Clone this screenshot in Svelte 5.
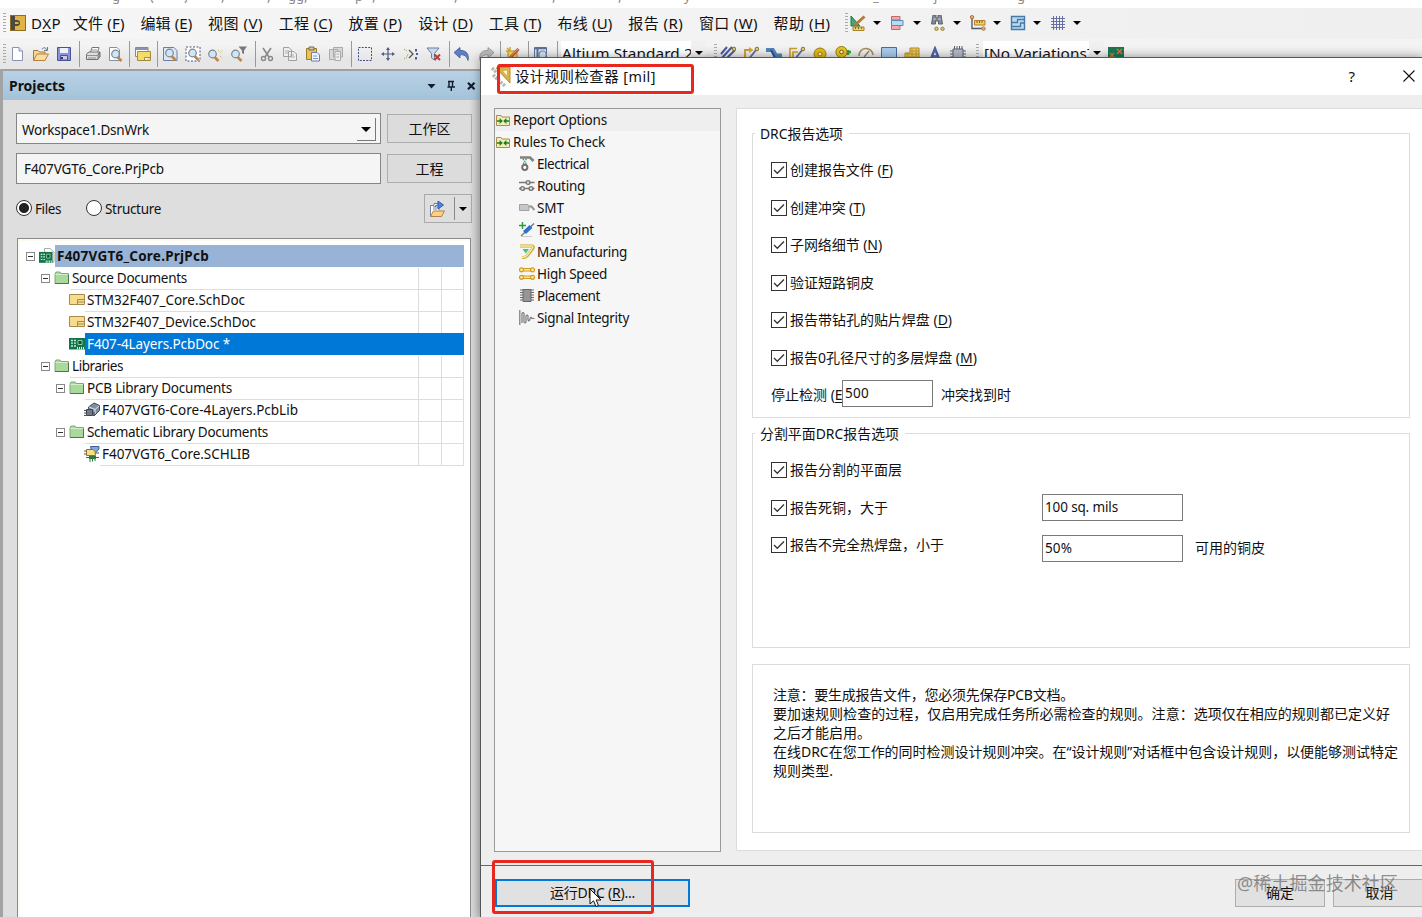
<script>
  function fit(node, width) {
    if (!width) return;
    node.style.letterSpacing = '0px';
    const natural = node.getBoundingClientRect().width;
    const n = [...node.textContent].length;
    if (n > 1) node.style.letterSpacing = (width - natural) / n + 'px';
  }

  const titleMarks = [
    ['g', 112], ['(', 38], [')', 34], [',', 37], [',', 46], ['gg', 21], [',', 16], ['p', 51], [',', 17],
    [',', 82], [',', 98], [',', 66], ['y', 66], ['_', 189], ['j', 61], ['g', 83]
  ];

  const menus = [
    ['文件', 'F', 52], ['编辑', 'E', 52], ['视图', 'V', 55], ['工程', 'C', 54], ['放置', 'P', 54],
    ['设计', 'D', 55], ['工具', 'T', 53], ['布线', 'U', 55], ['报告', 'R', 55], ['窗口', 'W', 59], ['帮助', 'H', 57]
  ];

  const menuTools = ['draw', 'align', 'binoc', 'dims', 'rooms', 'grid'];

  const toolsA = [
    ['new', 3], ['open', 8], ['save', 7], ['|', 7], ['print', 5], ['preview', 6], ['|', 6], ['sheet', 5], ['|', 6],
    ['zoomdoc', 4], ['zoomsel', 7], ['zoomlast', 7], ['zoomfil', 7], ['|', 8], ['cut', 3], ['copy', 7], ['paste', 7],
    ['stamp', 7], ['|', 7], ['marquee', 5], ['move', 7], ['desel', 7], ['clearf', 7], ['|', 7], ['undo', 4],
    ['redo', 8], ['|', 6], ['wizard', 4], ['|', 7], ['browse', 4], ['|', 8]
  ];
  const toolsB = ['multi', 'route', 'diff', 'iroute', 'pad', 'via', 'arc', 'fill', 'poly', 'string', 'comp'];

  const lens = '<path d="M9.5 10 L13.5 14" stroke="#c8843c" stroke-width="2.6"/><circle cx="7.5" cy="7" r="3.8" fill="#cfe6f7" stroke="#7c8794" stroke-width="1.2"/>';
  const folder = '<path d="M1 4 L2 2 H6 L7 3.5 H14.5 V13.5 H1Z" fill="#a9d99b" stroke="#7da878"/><path d="M1.5 4.5 H13.5" stroke="#d4f0cb"/><path d="M1 13.5 H14.5 V5" stroke="#4f7550"/>';
  const dfolder = '<path d="M1.5 3.5 H6 L7 5 H14.5 V13.5 H1.5Z" fill="#f5edb5" stroke="#a58f4c"/><path d="M2 9 H7 M9 9 H14" stroke="#178322" stroke-width="1.4"/><path d="M4.6 6 L7.8 9 L4.6 12Z M11.4 6 L8.2 9 L11.4 12Z" fill="#178322"/>';
  const board = '<path d="M0 2 H16 V13.5 H0Z" fill="#13764a"/><path d="M2 4.5 H4 M2 7.2 H4 M2 10 H4 M5 4.5 H7 M5 7.2 H7 M5 10 H7" stroke="#c6ead5" stroke-width="1.3"/><path d="M9 4.5 H13 V8.5 H9Z" fill="#0b4d2d" stroke="#b4e0c8" stroke-width=".8"/><path d="M8.5 11 V13.5 M10.5 11 V13.5 M12.5 11 V13.5 M14.5 11 V13.5" stroke="#e0f5e8"/>';

  const icons = {
    dxp: '<rect x=".5" y=".5" width="15" height="15" fill="#dfb445" stroke="#8d6c23"/><path d="M1 1 H5 V5 H7 A3 3 0 0 1 7 11 H5 V15 H1Z" fill="#4a4a42"/><path d="M5 8 H8.5" stroke="#dfb445" stroke-width="2"/>',
    new: '<path d="M3.5 1.5 H10 L13.5 5 V14.5 H3.5Z" fill="#fff" stroke="#8b93b5"/><path d="M10 1.5 V5 H13.5" fill="#dfe4f5" stroke="#8b93b5"/>',
    open: '<path d="M.5 14.5 V4.5 H5 L6.5 6 H12 V8" fill="#f3d79a" stroke="#a77a3c"/><path d="M.5 14.5 L4 8 H15.5 L12 14.5Z" fill="#fbdca0" stroke="#b8813f"/><path d="M9 3 Q12 0 14 4 M14.5 1 V4.5 H11" stroke="#6f7a86" fill="none"/>',
    save: '<path d="M1.5 1.5 H14.5 V14.5 H1.5Z" fill="#8c91d4" stroke="#4d529b"/><path d="M4 2 H12 V7 H4Z" fill="#eef1fb"/><path d="M4.5 9.5 H11.5 V14 H4.5Z" fill="#c7cbe8" stroke="#4d529b"/><path d="M6 11 V13" stroke="#35397a" stroke-width="2"/>',
    print: '<path d="M5 8 L7 1.5 H14 L12 8Z" fill="#fff" stroke="#777"/><path d="M1.5 8 L4 6 H15 L13 8 V13.5 H1.5Z" fill="#dcdee0" stroke="#6e7072"/><path d="M1.5 9.5 H13 M3 12 H11 M7 4 H12" stroke="#8e9092"/><path d="M13 8 L15 6 V11 L13 13" fill="#999" stroke="#6e7072"/>',
    preview: '<path d="M2.5 1.5 H10 L12.5 4 V14.5 H2.5Z" fill="#fff" stroke="#8791a5"/><g transform="translate(1 1)">' + lens + '</g>',
    sheet: '<path d="M.5 1.5 H13 V10.5 H.5Z" fill="#fff" stroke="#a58a3b"/><path d="M.5 3 H13" stroke="#8b93b5" stroke-width="2"/><path d="M2.5 5.5 H15.5 V14.5 H2.5Z" fill="#f4dc6c" stroke="#a58a3b"/><path d="M9.5 14 V11.5 H15" fill="#fff" stroke="#a58a3b"/>',
    zoomdoc: '<path d="M1.5 1.5 H12 L15 4.5 V14.5 H1.5Z" fill="#dbe7f5" stroke="#6e7fa5"/>' + lens,
    zoomsel: '<path d="M1 1 H15 V15 H1Z" fill="#fff" stroke="#4a5584" stroke-dasharray="2 1.5"/>' + lens,
    zoomlast: '<g transform="translate(-3 1)">' + lens + '</g><path d="M10 4 L12.5 6.5 L15 4 M12 10 L14.5 12" stroke="#c3b66a" stroke-dasharray="1.5 1" fill="none"/>',
    zoomfil: '<g transform="translate(-3 1)">' + lens + '</g><path d="M7.5 .5 H16 L13 4.5 V8 L11 7 V4.5Z" fill="#777"/>',
    cut: '<path d="M4 2 L10 11 M12 2 L6 11" stroke="#888" stroke-width="1.6"/><circle cx="4.5" cy="12.5" r="2" fill="none" stroke="#888" stroke-width="1.4"/><circle cx="11.5" cy="12.5" r="2" fill="none" stroke="#888" stroke-width="1.4"/>',
    copy: '<path d="M1.5 1.5 H7 L9.5 4 V10.5 H1.5Z M6.5 5.5 H12 L14.5 8 V14.5 H6.5Z" fill="#eee" stroke="#a0a0a0"/><path d="M3 5 H7 M3 7 H6 M8 9 H12 M8 11 H13" stroke="#b0b0b0"/>',
    paste: '<path d="M1.5 2.5 H11.5 V13.5 H1.5Z" fill="#e7c35a" stroke="#9b7a2c"/><path d="M4 1 H9 V4 H4Z" fill="#c8c8bf" stroke="#7a6a3c"/><path d="M6.5 6.5 H12 L14.5 9 V15 H6.5Z" fill="#eef3fc" stroke="#6e7fb0"/><path d="M8 10 H12 M8 12.5 H13" stroke="#7f93c5"/>',
    stamp: '<path d="M1.5 3.5 H10 V13.5 H1.5Z M5.5 1.5 H14.5 V11 H5.5Z" fill="#d8d8d8" stroke="#aaa"/><path d="M7 5.5 H12.5 V14.5 H7Z" fill="#eee" stroke="#aaa"/><path d="M8.5 8 H11 M8.5 11 H11" stroke="#aaa"/>',
    marquee: '<path d="M1.5 1.5 H14.5 V14.5 H1.5Z" fill="none" stroke="#3f4c8c" stroke-dasharray="2 1.25"/>',
    move: '<path d="M8 2.5 V13.5 M2.5 8 H13.5" stroke="#4f5d7c" stroke-width="1.2"/><path d="M8 1 L10 4 H6Z M8 15 L10 12 H6Z M1 8 L4 6 V10Z M15 8 L12 6 V10Z" fill="#4f5d7c"/>',
    desel: '<path d="M1 3 L4 5 M1 13 L4 11 L5 8" stroke="#a9a24f" stroke-dasharray="1.5 1" fill="none"/><path d="M6 4 L10 8 L6 12" stroke="#555" stroke-width="1.3" fill="none"/><path d="M12 3 H14 V5.5 H12Z M13 7 H15 V9 H13Z M12 11 H14 V13.5 H12Z" fill="#4f5d9c"/>',
    clearf: '<path d="M1 2 H13 L8.5 7.5 V14 L5.5 12 V7.5Z" fill="#c8dcec" stroke="#6a7f99"/><path d="M8.5 8.5 L14 14 M14 8.5 L8.5 14" stroke="#c43a35" stroke-width="2"/>',
    undo: '<path d="M0 6.5 L6 1.5 V4.5 C12 4 15.5 8 14 14.5 C12.5 10 10.5 8.5 6 8.8 V12Z" fill="#5d7fc9" stroke="#3d5594" stroke-width=".8"/>',
    redo: '<path d="M16 6.5 L10 1.5 V4.5 C4 4 .5 8 2 14.5 C3.5 10 5.5 8.5 10 8.8 V12Z" fill="#bdbdbd" stroke="#929292" stroke-width=".8"/>',
    wizard: '<path d="M3 5 H12 V14 H3Z" fill="#f6d95c" stroke="#b3942e"/><path d="M2 2 L5 5 M5 1 V4 M1 5 H4" stroke="#d6a51c" stroke-width="1.4"/><path d="M5 12 L13.5 3" stroke="#c8503c" stroke-width="3"/><path d="M6 10.5 L13 3" stroke="#f1b06c" stroke-width="1"/>',
    browse: '<path d="M1.5 1.5 H13.5 V14 H1.5Z" fill="#dbe7f5" stroke="#5c6f99"/><path d="M2 2.5 H13" stroke="#5c6f99" stroke-width="1.6"/><path d="M4.5 2 V14" stroke="#5c6f99" stroke-width="2"/><g transform="translate(2.5 2) scale(.95)">' + lens + '</g>',
    multi: '<path d="M1 8 L7 1 M1 13 L12 1 M5 14 L15 4" stroke="#4a5a9a" stroke-width="2"/><circle cx="14" cy="3" r="1.8" fill="#d7c777" stroke="#80713a"/>',
    route: '<path d="M2 12 V4 H6" stroke="#c79b28" stroke-width="1.8" fill="none"/><path d="M6 1 L10.5 4 L6 7Z" fill="#d7a52a"/><path d="M5 14 L13 4" stroke="#5e6f9c" stroke-width="2"/><circle cx="14" cy="3" r="1.8" fill="#e1cf77" stroke="#80713a"/>',
    diff: '<path d="M0 2 H8 L11 7.5 H16 V11.5 H9 L6 6 H0Z" fill="#4d86b8"/><path d="M5 4 L9 12" stroke="#2d4f94" stroke-width="2"/>',
    iroute: '<path d="M1 12 V2.5 H8 M4 12 V6 H9" stroke="#c79b28" stroke-width="1.6" fill="none"/><path d="M6 13 L14 3" stroke="#5e6f9c" stroke-width="2"/><circle cx="14" cy="3" r="1.8" fill="#e1cf77" stroke="#80713a"/>',
    pad: '<circle cx="8" cy="8" r="6" fill="#e3b919" stroke="#9b7a0c"/><circle cx="8" cy="8" r="2" fill="#fff4b5" stroke="#9b7a0c"/>',
    via: '<path d="M9 6 H16 M13 4 V9" stroke="#3f9a35" stroke-width="2.5"/><circle cx="6.5" cy="6" r="5.6" fill="#e3c419" stroke="#9b7a0c"/><circle cx="6.5" cy="6" r="1.8" fill="#fff" stroke="#705a0c"/>',
    arc: '<path d="M1 10 A7 7 0 0 1 15 9" stroke="#a48a5c" stroke-width="1.6" fill="none"/><path d="M6 11 L11 5" stroke="#82796c" stroke-width="1.2"/>',
    fill: '<path d="M.5 1.5 H15.5 V14 H.5Z" fill="#a7cbec" stroke="#4a6c9e"/>',
    poly: '<path d="M1 14 V7 H6 V2 H15 V14Z" fill="#f1cd5b" stroke="#b18a25"/><path d="M6 5 H15 M1 8 H15 M1 11 H15 M4 7 V14 M8 3 V14 M12 3 V14" stroke="#c09a33"/>',
    string: '<path d="M3.5 14 L8 2.5 L12.5 14" fill="none" stroke="#4f62a8" stroke-width="2.4"/><path d="M5 10 H11" stroke="#4f62a8" stroke-width="1.8"/>',
    comp: '<path d="M3 3 H13 V15 H3Z" fill="#b4b8c6" stroke="#5c6170"/><path d="M4.5 0 V3 M7 0 V3 M9.5 0 V3 M12 0 V3 M0 5 H3 M0 8 H3 M0 11 H3 M13 5 H16 M13 8 H16 M13 11 H16" stroke="#5c6170"/>',
    variant: '<path d="M0 1 H16 V16 H0Z" fill="#1a7650"/><path d="M2 7 L6 11 M6 7 L2 11 M9 3 L14 8 M14 3 L9 8" stroke="#d0743d" stroke-width="1.5"/>',
    draw: '<path d="M1 1 V11 H10Z" fill="#45a870" stroke="#1e7744"/><path d="M5 10 L14.5 1.5" stroke="#b77a38" stroke-width="3"/><path d="M3 12 H14 V15.5 H3Z" fill="#f4cf62" stroke="#a5822c"/><path d="M5.5 12 V14 M8.5 12 V14 M11.5 12 V14" stroke="#8d6c23"/>',
    align: '<path d="M1.5 1.5 H10 V5 H1.5Z M1.5 10.5 H10 V14.5 H1.5Z" fill="#f1a9a9" stroke="#c26a6d"/><path d="M1.5 5.5 H13 V10.5 H1.5Z" fill="#b5dcf3" stroke="#558bb5"/>',
    binoc: '<path d="M3 0 H6 V3 H8 V0 H11 L12.5 9 H8.5 V6 H5.5 V9 H1.5Z" fill="#858b96" stroke="#5c626d"/><path d="M3.5 4 H5.5 M8.5 4 H10.5" stroke="#dde"/><circle cx="6.5" cy="13.8" r="1.7" fill="#dcca6c" stroke="#8f803c"/><circle cx="12.5" cy="13.8" r="1.7" fill="#dcca6c" stroke="#8f803c"/>',
    dims: '<path d="M2 3 V13.5 H13" fill="none" stroke="#525c70" stroke-width="1.4"/><path d="M4.5 5.5 H15 V10 H4.5Z" fill="#f4cf62" stroke="#b27d2c"/><path d="M7 6 V8 M9.5 6 V8 M12 6 V8" stroke="#80602c"/><circle cx="2" cy="2.2" r="1.7" fill="#f0b268" stroke="#a3703c"/><circle cx="13.5" cy="13.6" r="1.7" fill="#f0b268" stroke="#a3703c"/>',
    rooms: '<path d="M1.5 1.5 H14.5 V14.5 H1.5Z" fill="#b9dcf2" stroke="#4878a6" stroke-width="1.4"/><path d="M1.5 7.5 H7.5 V4.5 H14.5 M1.5 11.5 H10.5 V8 H14.5" fill="none" stroke="#4878a6" stroke-width="1.3"/>',
    grid: '<path d="M3.5 1 V15 M6.5 1 V15 M9.5 1 V15 M12.5 1 V15 M1 3.5 H15 M1 6.5 H15 M1 9.5 H15 M1 12.5 H15" stroke="#6670a5"/>',
    pcbprj: '<path d="M5.5 .5 H11 L15 4 V14 H5.5Z" fill="#fff" stroke="#aaa"/><g transform="translate(0 2) scale(.85 .95)">' + board + '</g>',
    folder, dfolder, board,
    sch: '<path d="M.5 2.5 H15.5 V12.5 H.5Z" fill="#f7dc8d" stroke="#a78a4c"/><path d="M8.5 12 V7.5 H15 M8.5 10 H15" stroke="#a78a4c" fill="none"/>',
    pcblib: '<path d="M4.5 5 L10 1 L15.5 3.5 V8.5 L11 13 L5 10Z" fill="#7f8fa4" stroke="#434a55"/><path d="M5 5 L11 7.5 L15 4 M11 7.5 V12" stroke="#dde3ea" fill="none"/><path d="M2.5 7.5 H8.5 V13.5 H2.5Z" fill="#747b87" stroke="#3f444c"/><path d="M0 8.5 H2 M0 11 H2 M0 13.5 H2 M9 11 H11 M9 13.5 H11" stroke="#434a55"/>',
    schlib: '<path d="M6.5 .5 H15 V3 L12 6.5 H8Z" fill="#7da6dc" stroke="#3f5f9c"/><path d="M2.5 3.5 H9 Q12 5 11.5 9.5 H2.5Z" fill="#f6df86" stroke="#8c7330"/><path d="M0 5 H2 M0 8 H2 M12 7 H15" stroke="#555"/><path d="M5 10 H12 V13 H5Z" fill="#2c7a3e"/><path d="M6 13 V16 M8.5 13 V15.5 M11 13 V15 M2 11.5 H5 M12 11.5 H15" stroke="#2c7a3e"/>',
    refresh: '<path d="M1.5 15 V4.5 H5 V2.5 H10 V9" fill="#fff" stroke="#7383a5"/><path d="M4 6 H9 M4 8 H8" stroke="#7383a5"/><path d="M1.5 15.5 L4.5 10 H15.5 L12.5 15.5Z" fill="#f9d28c" stroke="#b8813f"/><path d="M9 0 L14.5 4 L9 8Z" fill="#4f84e0" stroke="#315db0"/><path d="M6 6 Q6 4 9 4" stroke="#315db0" fill="none"/>',
    electrical: '<path d="M1 1.5 H11 L14.5 5" stroke="#808080" stroke-width="2.6" fill="none"/><path d="M4 3 L7.5 8 M7.5 3 L4 8" stroke="#37a57c" stroke-width="1.4" stroke-dasharray="1.4 .8"/><circle cx="5.8" cy="11.3" r="2.6" fill="#fff" stroke="#707070" stroke-width="2"/>',
    routing: '<path d="M0 4.5 H15.5 M0 10.5 H15.5" stroke="#777" stroke-width="1.3"/><circle cx="9" cy="4.5" r="1.9" fill="#ddd" stroke="#777" stroke-width="1.4"/><circle cx="3.5" cy="10.5" r="1.9" fill="#ddd" stroke="#777" stroke-width="1.4"/><circle cx="12" cy="10.5" r="1.9" fill="#ddd" stroke="#777" stroke-width="1.4"/>',
    smt: '<path d="M.5 4.5 H9 L10 5.5 V10.5 H.5Z" fill="#c7c7c7" stroke="#a2a2a2"/><path d="M10 6.5 H12.5 L15.5 10" fill="none" stroke="#999" stroke-width="2.2"/>',
    testpoint: '<path d="M3.5 0 V7 M0 3.5 H7" stroke="#249a3a" stroke-width="1.4"/><path d="M2 14 L15 1.5" stroke="#777" stroke-width="1.3"/><path d="M5.5 10.5 L12 4.5" stroke="#2d72cc" stroke-width="4.2"/><path d="M2 14.5 H13" stroke="#ccc"/>',
    manuf: '<path d="M1 2 H13 Q15.5 2.5 13.5 5 L8 12 Q6 14 3 13.5" fill="none" stroke="#c6aa35" stroke-width="3"/><path d="M1 2 H13 Q14.5 2.5 13 5 L8 11.5 Q6 13.5 3 13.5" fill="none" stroke="#f8eda0" stroke-width="1.3"/><path d="M3.5 5 H10 L6.8 9.5Z" fill="#46c28b"/>',
    speed: '<g fill="#fbe9a0" stroke="#d29a1c" stroke-width="1.2"><path d="M3 2.5 H13 V5 H3Z M3 10 H13 V12.5 H3Z"/><circle cx="2.5" cy="3.8" r="2"/><circle cx="13.5" cy="3.8" r="2"/><circle cx="2.5" cy="11.3" r="2"/><circle cx="13.5" cy="11.3" r="2"/></g>',
    placement: '<path d="M4 1.5 H12 V13.5 H4Z" fill="#969696" stroke="#666"/><path d="M1 2 H4 M1 4.5 H4 M1 7 H4 M1 9.5 H4 M1 12 H4 M12 2 H15 M12 4.5 H15 M12 7 H15 M12 9.5 H15 M12 12 H15" stroke="#666"/>',
    signal: '<path d="M.8 0 V15 M3 13 V3.5 Q4 1.5 5 3.5 V12 Q6 14 7 12 V6 Q8 4 9 6 V10 Q10 12 11 9 Q12 6 13 8.5 L15.5 8.5" fill="none" stroke="#777" stroke-width="1.2"/>'
  };

  const tree = [
    { l: 0, i: 'pcbprj', t: 'F407VGT6_Core.PrjPcb', w: 152, x: true, k: 'root' },
    { l: 1, i: 'folder', t: 'Source Documents', w: 115, x: true },
    { l: 2, i: 'sch', t: 'STM32F407_Core.SchDoc', w: 158 },
    { l: 2, i: 'sch', t: 'STM32F407_Device.SchDoc', w: 169 },
    { l: 2, i: 'board', t: 'F407-4Layers.PcbDoc *', w: 143, k: 'active' },
    { l: 1, i: 'folder', t: 'Libraries', w: 51, x: true },
    { l: 2, i: 'folder', t: 'PCB Library Documents', w: 145, x: true },
    { l: 3, i: 'pcblib', t: 'F407VGT6-Core-4Layers.PcbLib', w: 196 },
    { l: 2, i: 'folder', t: 'Schematic Library Documents', w: 181, x: true },
    { l: 3, i: 'schlib', t: 'F407VGT6_Core.SCHLIB', w: 148 }
  ];

  const rules = [
    ['dfolder', 'Report Options', 94, 0], ['dfolder', 'Rules To Check', 92, 0],
    ['electrical', 'Electrical', 52, 1], ['routing', 'Routing', 48, 1], ['smt', 'SMT', 27, 1],
    ['testpoint', 'Testpoint', 57, 1], ['manuf', 'Manufacturing', 90, 1], ['speed', 'High Speed', 70, 1],
    ['placement', 'Placement', 63, 1], ['signal', 'Signal Integrity', 92, 1]
  ];

  const checks = [
    ['创建报告文件', 'F', 103], ['创建冲突', 'T', 75], ['子网络细节', 'N', 92], ['验证短路铜皮', '', 84],
    ['报告带钻孔的贴片焊盘', 'D', 162], ['报告0孔径尺寸的多层焊盘', 'M', 187]
  ];

  const notes = [
    ['注意：要生成报告文件，您必须先保存PCB文档。', 301],
    ['要加速规则检查的过程，仅启用完成任务所必需检查的规则。注意：选项仅在相应的规则都已定义好', 617],
    ['之后才能启用。', 98],
    ['在线DRC在您工作的同时检测设计规则冲突。在“设计规则”对话框中包含设计规则，以便能够测试特定', 625],
    ['规则类型.', 60]
  ];
</script>

{#snippet icon(name)}
  <svg class="ico" viewBox="0 0 16 16" fill="none">{@html icons[name]}</svg>
{/snippet}
{#snippet caret()}<i class="caret"></i>{/snippet}
{#snippet check(t, k, w)}
  <label class="check">
    <svg class="box" viewBox="0 0 16 16"><rect x=".5" y=".5" width="15" height="15" fill="#fff" stroke="#333" /><path d="M3 8 L6.3 11.3 L13 4.5" fill="none" stroke="#333" stroke-width="1.3" /></svg>
    <span class="t" use:fit={w}>{t}{#if k}{' '}(<u>{k}</u>){/if}</span>
  </label>
{/snippet}

<div class="app">
  <div class="title">{#each titleMarks as [c, m]}<span style="margin-left:{m}px">{c}</span>{/each}</div>
  <nav class="menubar">
    <i class="grip"></i>
    <span class="dxp">{@render icon('dxp')}</span>
    <span class="m first" style="width:30px"><span class="t" use:fit={30}>D<u>X</u>P</span></span>
    {#each menus as [t, k, w]}
      <span class="m" style="width:{w}px"><span class="t" use:fit={w}>{t} (<u>{k}</u>)</span></span>
    {/each}
    <i class="grip second"></i>
    {#each menuTools as n}<span class="mt">{@render icon(n)}{@render caret()}</span>{/each}
  </nav>
  <div class="toolbar">
    <i class="grip"></i>
    {#each toolsA as [n, g]}
      {#if n === '|'}<i class="sep" style="margin-left:{g}px"></i>{:else}<span class="tb" style="margin-left:{g}px">{@render icon(n)}</span>{/if}
    {/each}
    <div class="combo"><span class="clip"><span class="t" use:fit={142}>Altium Standard 2D</span></span><span class="drop">{@render caret()}</span></div>
    <i class="grip g2"></i>
    <div class="tset">{#each toolsB as n}{@render icon(n)}{/each}</div>
    <i class="grip g3"></i>
    <div class="combo vars"><span class="clip"><span class="t" use:fit={108}>[No Variations]</span></span><span class="drop">{@render caret()}</span></div>
    <span class="tb last">{@render icon('variant')}</span>
  </div>

  <aside class="panel">
    <header>
      <b class="t" use:fit={56}>Projects</b>
      <svg width="50" height="14" viewBox="0 0 50 14"><path d="M1.5 5 H9.5 L5.5 9.5Z" fill="#111c2a" /><path d="M22 2.5 H28 M23 2.5 V8 M26.5 2.5 V8 M21.5 8 H29 M25.3 8 V12" stroke="#111c2a" stroke-width="1.4" fill="none" /><path d="M42 3.8 L48.5 10.3 M48.5 3.8 L42 10.3" stroke="#111c2a" stroke-width="2.2" /></svg>
    </header>
    <div class="form">
      <div class="field"><span class="t" use:fit={127}>Workspace1.DsnWrk</span><span class="pick">{@render caret()}</span></div>
      <button><span class="t" use:fit={42}>工作区</span></button>
      <div class="field prj"><span class="t" use:fit={140}>F407VGT6_Core.PrjPcb</span></div>
      <button><span class="t" use:fit={28}>工程</span></button>
    </div>
    <div class="views">
      <i class="radio on"></i><span class="t" use:fit={26}>Files</span>
      <i class="radio r2"></i><span class="t" use:fit={56}>Structure</span>
      <div class="split">{@render icon('refresh')}<i class="bar"></i>{@render caret()}</div>
    </div>
    <div class="tree">
      {#each tree as r}
        <div class="row {r.k ?? ''}" style="padding-left:{8 + r.l * 15}px">
          <span class="exp" class:show={r.x}></span>
          <span class="ti">{@render icon(r.i)}</span>
          <span class="lab"><span class="t" use:fit={r.w}>{r.t}</span><i class="c1"></i><i class="c2"></i></span>
        </div>
      {/each}
    </div>
  </aside>

  <section class="dialog">
    <header class="dtitle">
      <svg class="dicon" viewBox="0 0 20 22"><path d="M5 2 L19 17 V1Z" fill="#d9b04b" stroke="#b8912c" /><path d="M12 5 L16 9.5 V4.5Z" fill="#fff4d0" /><path d="M1 2 L6 7 M2 9 L14 20" stroke="#b9b4ab" stroke-width="3.4" stroke-dasharray="2.4 1" /></svg>
      <span class="t" use:fit={141}>设计规则检查器 [mil]</span>
      <span class="help">?</span>
      <svg class="close" viewBox="0 0 12 12"><path d="M.5 .5 L11.5 11.5 M11.5 .5 L.5 11.5" stroke="#111" stroke-width="1.1" /></svg>
    </header>
    <div class="dbody">
      <div class="rules">
        {#each rules as [i, t, w, l], n}
          <div class="rule" class:sub={l} class:sel={n === 0}>{@render icon(i)}<span class="t" use:fit={w}>{t}</span></div>
        {/each}
      </div>
      <div class="page">
        <div class="group g-a">
          <span class="legend"><span class="t" use:fit={83}>DRC报告选项</span></span>
          {#each checks as [t, k, w]}{@render check(t, k, w)}{/each}
          <div class="stop"><span class="cut">停止检测 (<u>E</u>)</span><div class="input"><span class="t" use:fit={24}>500</span></div><span>冲突找到时</span></div>
        </div>
        <div class="group g-b">
          <span class="legend"><span class="t" use:fit={139}>分割平面DRC报告选项</span></span>
          {@render check('报告分割的平面层', '', 112)}
          <div class="pair">{@render check('报告死铜，大于', '', 98)}<div class="input"><span class="t" use:fit={73}>100 sq. mils</span></div></div>
          <div class="pair p2">{@render check('报告不完全热焊盘，小于', '', 154)}<div class="input"><span class="t" use:fit={27}>50%</span></div><span class="after">可用的铜皮</span></div>
        </div>
        <div class="group g-c">
          {#each notes as [t, w]}<div><span class="t" use:fit={w}>{t}</span></div>{/each}
        </div>
      </div>
    </div>
    <footer>
      <button class="run"><span class="t" use:fit={85}>运行DRC (<u>R</u>)...</span></button>
      <button class="ok">确定</button>
      <button class="cancel">取消</button>
    </footer>
  </section>

  <div class="mark m1"></div>
  <div class="mark m2"></div>
  <svg class="cursor" viewBox="0 0 13 20"><path d="M1 1 V16 L4.5 12.8 L7 18.5 L9.5 17.5 L7.2 12 H12Z" fill="#fff" stroke="#111" /></svg>
  <div class="watermark"><span class="t" use:fit={161}>@稀土掘金技术社区</span></div>
</div>

<style>
  :global(body) { margin: 0; overflow: hidden; }
  .app { position: relative; width: 1422px; height: 917px; overflow: hidden; background: #f0f0f0; color: #111; font: 13.5px/20px "Noto Sans", "Noto Sans CJK SC", sans-serif; display: flex; flex-direction: column; }
  .app * { box-sizing: border-box; }
  .t { display: inline-block; white-space: nowrap; }
  u { text-underline-offset: 2px; text-decoration-thickness: 1px; }
  i { display: block; flex: none; }
  .ico { width: 16px; height: 16px; flex: none; display: block; }
  button { font: inherit; color: inherit; padding: 0; margin: 0; border: 1px solid #adadad; background: #e1e1e1; border-radius: 0; }
  .title { height: 8px; flex: none; background: #fff; display: flex; overflow: hidden; color: #888; font-size: 13px; line-height: 20px; }
  .title span { width: 0; position: relative; top: -14px; }
  .caret { width: 0; height: 0; border: 4px solid transparent; border-top: 4px solid #000; border-bottom: 0; }
  .grip { width: 3px; height: 20px; background: repeating-linear-gradient(#aaa 0 1px, transparent 1px 3px); }

  .menubar { height: 31px; flex: none; display: flex; align-items: center; padding: 0 0 2px 3px; font-size: 15px; line-height: 22px; background: linear-gradient(90deg, #f6f6f6, #efefef); }
  .dxp { margin-left: 4px; }
  .m { flex: none; margin-left: 15.7px; }
  .m.first { margin-left: 5px; margin-right: -4px; }
  .second { margin-left: 14px; }
  .mt { display: flex; align-items: center; gap: 7px; width: 40px; }
  .second + .mt { margin-left: 2px; }

  .toolbar { height: 30px; flex: none; display: flex; align-items: center; padding-left: 3px; background: linear-gradient(#f3f3f3 20%, #e6e6e6 70%); }
  .sep { width: 1px; height: 26px; background: #999; }
  .combo { flex: none; display: flex; width: 145px; height: 26px; margin-left: 3px; background: #fff; font-size: 15.3px; line-height: 24px; }
  .clip { width: 130px; overflow: hidden; white-space: nowrap; padding-left: 1px; }
  .drop { width: 15px; display: grid; place-items: center; background: #f0f0f0; padding-bottom: 2px; }
  .g2 { margin-left: 8px; }
  .tset { display: flex; gap: 7px; margin-left: 3px; }
  .g3 { margin-left: 10px; }
  .vars { width: 121px; margin-left: 4px; }
  .vars .clip { width: 106px; }
  .last { margin-left: 4px; }

  .panel { width: 481px; height: 848px; border-left: 3px solid #a3a3a3; border-top: 2px solid #a0a0a0; background: linear-gradient(90deg, #dedede 466px, #c4c4c4); }
  .panel header { height: 29px; padding: 0 5px 0 6px; display: flex; align-items: center; justify-content: space-between; background: linear-gradient(#b8d1e6, #a3c3d9); font-size: 14px; }
  .form { display: grid; grid-template-columns: 365px 85px; gap: 9px 6px; padding: 13px 0 0 13px; grid-auto-rows: 31px; }
  .field { border: 1px solid #858585; background: #f5f5f5; display: flex; align-items: center; padding: 3px 4px 0 5px; }
  .prj { padding: 0 7px; }
  .pick { margin: -1px 0 0 auto; width: 19px; height: 23px; display: grid; place-items: center; border-right: 1px solid #777; border-bottom: 1px solid #777; }
  .pick .caret { border-width: 5px 5px 0; }
  .form button { height: 29px; margin-top: 1px; background: #dcdcdc; font-size: 14px; }
  .views { display: flex; align-items: center; width: 462px; height: 29px; margin: 10px 0 0 13px; }
  .radio { width: 16px; height: 16px; border: 1px solid #333; border-radius: 50%; background: #fff; margin-right: 3px; position: relative; top: -1px; }
  .on { background: radial-gradient(#222 0 4.6px, #fff 5.4px); }
  .r2 { margin-left: 25px; }
  .split { margin-left: auto; margin-right: 6px; width: 48px; height: 29px; border: 1px solid #aaa; display: flex; align-items: center; padding-left: 4px; }
  .bar { width: 1px; height: 23px; background: #888; margin: 0 4px 0 9px; }
  .tree { width: 454px; height: 690px; margin: 15px 0 0 14px; border: 1px solid #8a8a8a; background: #fff; box-shadow: inset 2px 2px 0 #fdfaf0; padding: 6px 6px 0 0; }
  .row { height: 22px; display: flex; align-items: center; }
  .exp { width: 13px; height: 9px; flex: none; }
  .show { background: linear-gradient(#333, #333) 2px 4px / 5px 1px no-repeat, linear-gradient(#888, #888) 0 0 / 9px 1px no-repeat, linear-gradient(#888, #888) 0 8px / 9px 1px no-repeat, linear-gradient(#888, #888) 0 0 / 1px 9px no-repeat, linear-gradient(#888, #888) 8px 0 / 1px 9px no-repeat; }
  .ti { width: 16px; flex: none; }
  .lab { flex: 1; height: 22px; padding-left: 2px; border-bottom: 1px solid #ddd; border-right: 1px solid #ddd; display: flex; line-height: 23px; }
  .row:not(.root):not(.active) .lab { position: relative; top: 1px; line-height: 20px; }
  .c1 { margin-left: auto; width: 23px; border-left: 1px solid #ddd; }
  .c2 { width: 22px; border-left: 1px solid #ddd; }
  .root .lab { background: #98b3d6; border-color: #98b3d6; font-weight: 700; }
  .active .lab { background: #0078d7; border-color: #0078d7; color: #fff; position: relative; }
  .root i, .active i { display: none; }

  .dialog { position: absolute; left: 480px; top: 57px; width: 942px; height: 860px; border-left: 1px solid #555; border-top: 1px solid #555; background: #eee; box-shadow: 0 0 9px rgba(0, 0, 0, .35); display: flex; flex-direction: column; }
  .dtitle { height: 37px; flex: none; background: #fff; display: flex; align-items: center; padding: 0 7px 0 10px; font-size: 14.4px; }
  .dicon { width: 20px; height: 22px; margin-right: 4px; }
  .help { margin-left: auto; font-size: 15px; margin-right: 48px; position: relative; top: -1px; }
  .close { width: 12px; height: 12px; position: relative; top: -1px; }
  .dbody { display: flex; height: 770px; flex: none; padding: 13px 0 0 13px; gap: 15px; }
  .rules { width: 227px; height: 744px; border: 1px solid #999; background: #f6f6f6; }
  .rule { height: 22px; display: flex; align-items: center; gap: 2px; }
  .sub { padding-left: 24px; }
  .sel { background: #efefef; }
  .page { flex: 1; height: 743px; border: 1px solid #dcdcdc; border-right: 0; background: #fff; padding: 24px 12px 0 15px; font-size: 14px; }
  .group { position: relative; border: 1px solid #dcdcdc; padding-left: 18px; }
  .legend { position: absolute; left: 2px; top: -10px; padding: 0 6px 0 5px; background: #fff; font-size: 13.9px; }
  .g-a { height: 285px; padding-top: 17.5px; }
  .g-b { height: 215px; margin-top: 15px; padding-top: 17.5px; }
  .g-c { height: 169px; margin-top: 16px; padding: 20px 0 0 20px; line-height: 19px; }
  .g-c div { height: 19px; }
  .check { display: flex; align-items: center; height: 37.5px; gap: 3px; }
  .box { width: 16px; height: 16px; flex: none; }
  .stop { display: flex; height: 27px; margin-top: 3.5px; line-height: 30px; }
  .cut { width: 71px; overflow: hidden; white-space: nowrap; }
  .input { width: 91px; height: 27px; border: 1px solid #7a7a7a; background: #fff; line-height: 25px; padding-left: 2px; font-size: 13.5px; margin-right: 8px; }
  .pair { display: flex; align-items: center; height: 37.5px; }
  .pair .check { width: 271px; }
  .pair .input { width: 141px; margin-right: 12px; }
  .p2 .input, .after { position: relative; top: 3px; }
  footer { flex: 1; border-top: 1px solid #666; display: flex; padding: 13px 0 0 14px; font-size: 14px; }
  footer button { height: 28px; flex: none; }
  .run { width: 195px; border: 2px solid #0078d7; }
  .ok { width: 90px; margin-left: 545px; }
  .cancel { width: 93px; margin-left: 8px; }

  .mark { position: absolute; border: 3px solid #e8281e; border-radius: 3px; }
  .m1 { left: 497px; top: 64px; width: 197px; height: 30px; }
  .m2 { left: 492px; top: 860px; width: 162px; height: 54px; }
  .cursor { position: absolute; left: 589px; top: 888px; width: 13px; height: 20px; }
  .watermark { position: absolute; left: 1237px; top: 871px; font-size: 18px; line-height: 24px; color: rgba(110, 110, 110, .75); }
</style>
